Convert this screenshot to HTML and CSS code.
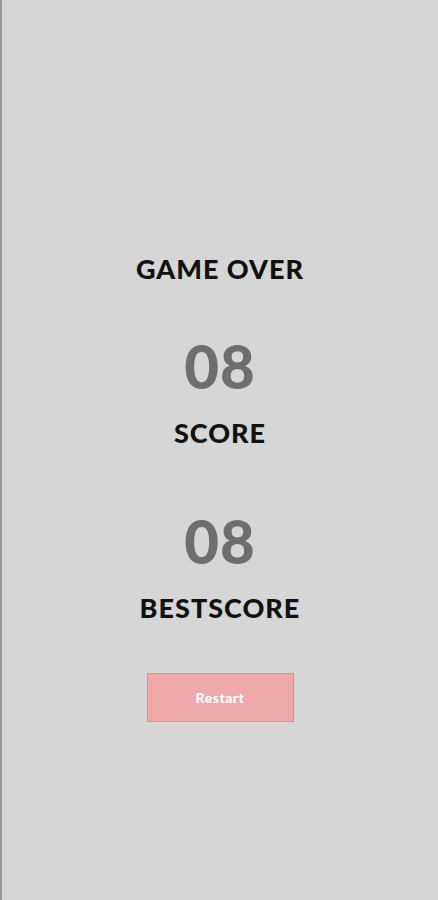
FILE: index.html
```html
<!DOCTYPE html>
<html>
<head>
<meta charset="utf-8">
<link rel="stylesheet" href="styles.css">
</head>
<body>
<main class="screen">
  <h1 class="title">GAME OVER</h1>
  <div class="num">08</div>
  <div class="label">SCORE</div>
  <div class="num num-best">08</div>
  <div class="label">BESTSCORE</div>
  <button class="restart">Restart</button>
</main>
</body>
</html>
```
FILE: styles.css
```css
html, body {
  margin: 0;
  padding: 0;
  height: 100%;
}
body {
  background: #d6d6d6;
  font-family: Lato, "Noto Sans", sans-serif;
}
.screen {
  box-sizing: border-box;
  height: 900px;
  border-left: 2px solid #9a9a9a;
  display: flex;
  flex-direction: column;
  align-items: center;
  padding-top: 252px;
}
.title {
  margin: 0;
  font-size: 27px;
  font-weight: 900;
  letter-spacing: 1px;
  line-height: 34px;
  color: #111;
}
.num {
  margin-top: 50px;
  font-size: 60px;
  font-weight: 900;
  line-height: 60px;
  color: #6e6e6e;
  letter-spacing: 1px;
}
.num-best {
  margin-top: 61px;
}
.label {
  margin-top: 20px;
  font-size: 27px;
  font-weight: 900;
  line-height: 34px;
  letter-spacing: 1px;
  color: #111;
}
.restart {
  margin-top: 48px;
  width: 147px;
  height: 49px;
  background: #efa9aa;
  border: 1px solid #d49294;
  color: #fff;
  font-family: Lato, sans-serif;
  font-weight: 900;
  font-size: 14px;
  letter-spacing: 0.5px;
}
```
